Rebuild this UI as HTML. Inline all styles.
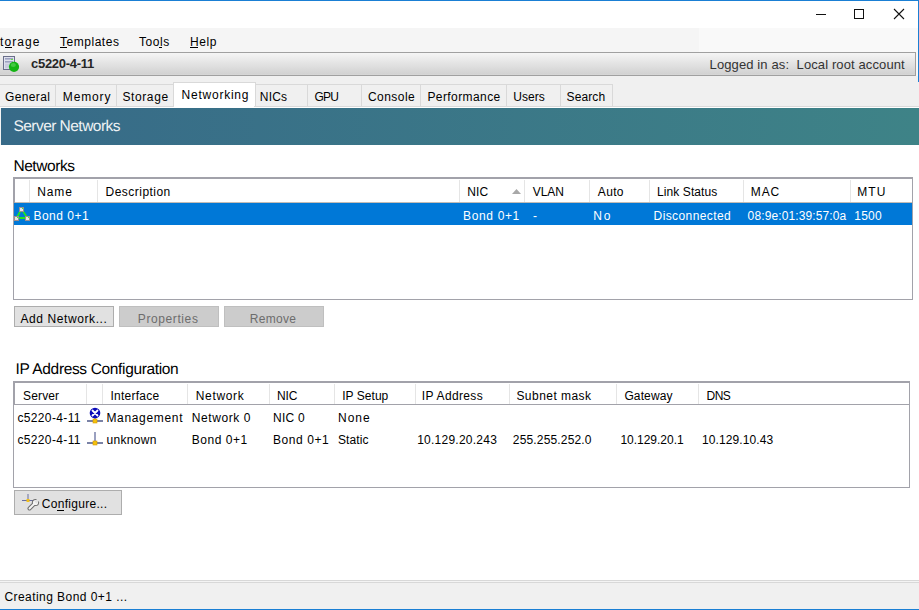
<!DOCTYPE html>
<html><head><meta charset="utf-8">
<style>
html,body{margin:0;padding:0;}
body{width:919px;height:610px;overflow:hidden;position:relative;background:#fff;font-family:"Liberation Sans",sans-serif;}
.a{position:absolute;}
.t{position:absolute;white-space:pre;line-height:20px;height:20px;font-family:"Liberation Sans",sans-serif;}
</style></head><body>
<!-- title bar -->
<div class="a" style="left:0;top:0;width:919px;height:1px;background:#1a7fd4"></div>
<div class="a" style="left:918px;top:0;width:1px;height:82px;background:#1a7fd4"></div>
<svg class="a" style="left:0;top:0" width="919" height="28">
  <rect x="816" y="14" width="10" height="1" fill="#111"/>
  <rect x="854.5" y="9.5" width="9" height="9" fill="none" stroke="#111" stroke-width="1"/>
  <path d="M894 9 L904 19 M904 9 L894 19" stroke="#111" stroke-width="1.1"/>
</svg>
<!-- menu bar -->
<div class="a" style="left:0;top:28px;width:699px;height:24px;background:#f5f5f5"></div>
<div class="a" style="left:699px;top:28px;width:219px;height:24px;background:#f9f9f9"></div>
<!-- menu underlines -->
<div class="a" style="left:5px;top:47px;width:7px;height:1px;background:#000"></div>
<div class="a" style="left:60px;top:47px;width:7px;height:1px;background:#000"></div>
<div class="a" style="left:159px;top:47px;width:3px;height:1px;background:#000"></div>
<div class="a" style="left:190px;top:47px;width:8px;height:1px;background:#000"></div>
<!-- host header -->
<div class="a" style="left:0;top:52px;width:915px;height:22px;border-top:1px solid #a0a0a0;border-bottom:1px solid #a0a0a0;border-right:1px solid #a0a0a0;background:linear-gradient(#f5f5f5,#e6e6e6 40%,#d2d2d2 95%,#d8d8d8)"></div>
<div class="a" style="left:916px;top:52px;width:2px;height:24px;background:#f9f9f9"></div>
<svg class="a" style="left:0;top:52px" width="24" height="22">
  <rect x="3.5" y="4.5" width="11" height="13" fill="#dfe1ee" stroke="#6a6f8a"/>
  <rect x="5" y="6" width="8" height="1.6" fill="#9da2c0"/>
  <rect x="5" y="9" width="8" height="1.6" fill="#9da2c0"/>
  <rect x="5" y="11.5" width="8" height="5" fill="#c9ccde"/>
  <rect x="11" y="7" width="2" height="1" fill="#66e040"/>
  <circle cx="14" cy="14.8" r="5.1" fill="#14b414"/>
  <ellipse cx="13.3" cy="13" rx="2.6" ry="2" fill="#7ee07e" opacity="0.45"/>
</svg>
<!-- tab strip -->
<div class="a" style="left:0;top:76px;width:919px;height:30px;background:#f0f0f0"></div>
<div class="a" style="left:0;top:84px;width:612px;height:23px;border-top:1px solid #d9d9d9;"></div>
<div class="a" style="left:55px;top:84px;width:1px;height:23px;background:#d9d9d9"></div>
<div class="a" style="left:116px;top:84px;width:1px;height:23px;background:#d9d9d9"></div>
<div class="a" style="left:307px;top:84px;width:1px;height:23px;background:#d9d9d9"></div>
<div class="a" style="left:361px;top:84px;width:1px;height:23px;background:#d9d9d9"></div>
<div class="a" style="left:420px;top:84px;width:1px;height:23px;background:#d9d9d9"></div>
<div class="a" style="left:506px;top:84px;width:1px;height:23px;background:#d9d9d9"></div>
<div class="a" style="left:560px;top:84px;width:1px;height:23px;background:#d9d9d9"></div>
<div class="a" style="left:612px;top:84px;width:1px;height:23px;background:#d9d9d9"></div>
<div class="a" style="left:173px;top:82px;width:81px;height:25px;background:#fff;border:1px solid #d9d9d9;border-bottom:none"></div>
<!-- banner -->
<div class="a" style="left:0;top:106px;width:919px;height:1px;background:#dadada"></div>
<div class="a" style="left:0;top:107px;width:919px;height:1px;background:#fff"></div>
<div class="a" style="left:0;top:108px;width:1px;height:37px;background:#f4f4f4"></div>
<div class="a" style="left:174px;top:106px;width:80px;height:2px;background:#fff"></div>
<div class="a" style="left:1px;top:108px;width:918px;height:37px;background:linear-gradient(90deg,#376a88,#3e8387)"></div>

<!-- grid 1 -->
<div class="a" style="left:13px;top:177px;width:898px;height:120px;border:1px solid #a2a2aa;border-top-width:2px;background:#fff"></div>
<div class="a" style="left:14px;top:179px;width:1px;height:24px;background:#a2a2aa"></div>
<div class="a" style="left:15px;top:202px;width:897px;height:1px;background:#c2bcb6"></div>
<div class="a" style="left:29px;top:180px;width:1px;height:22px;background:#e5e5e5"></div>
<div class="a" style="left:97px;top:180px;width:1px;height:22px;background:#e5e5e5"></div>
<div class="a" style="left:459px;top:180px;width:1px;height:22px;background:#e5e5e5"></div>
<div class="a" style="left:524px;top:180px;width:1px;height:22px;background:#e5e5e5"></div>
<div class="a" style="left:589px;top:180px;width:1px;height:22px;background:#e5e5e5"></div>
<div class="a" style="left:649px;top:180px;width:1px;height:22px;background:#e5e5e5"></div>
<div class="a" style="left:743px;top:180px;width:1px;height:22px;background:#e5e5e5"></div>
<div class="a" style="left:850px;top:180px;width:1px;height:22px;background:#e5e5e5"></div>
<svg class="a" style="left:505px;top:186px" width="20" height="10"><path d="M7 8 L11.5 3 L16 8 Z" fill="#a8a8a8"/></svg>
<div class="a" style="left:14px;top:203px;width:898px;height:22px;background:#0078d7"></div>
<svg class="a" style="left:14px;top:203px" width="16" height="22">
  <path d="M7.5 6 L2.5 15 L13.5 15 Z" fill="none" stroke="#1ee61e" stroke-width="1.8"/>
  <rect x="5.5" y="4.5" width="4" height="4" fill="#e4e4e4" stroke="#9a8f8f" stroke-width="1"/>
  <rect x="0.5" y="13.5" width="4" height="4" fill="#e4e4e4" stroke="#9a8f8f" stroke-width="1"/>
  <rect x="11.5" y="13.5" width="4" height="4" fill="#e4e4e4" stroke="#9a8f8f" stroke-width="1"/>
  <rect x="8" y="5" width="1" height="1" fill="#3f3"/><rect x="3" y="14" width="1" height="1" fill="#3f3"/><rect x="14" y="14" width="1" height="1" fill="#3f3"/>
</svg>

<!-- buttons -->
<div class="a" style="left:14px;top:306px;width:98px;height:19px;background:#e1e1e1;border:1px solid #adadad"></div>
<div class="a" style="left:119px;top:306px;width:98px;height:19px;background:#cccccc;border:1px solid #bfbfbf"></div>
<div class="a" style="left:224px;top:306px;width:98px;height:19px;background:#cccccc;border:1px solid #bfbfbf"></div>

<!-- grid 2 -->
<div class="a" style="left:13px;top:381px;width:895px;height:104px;border:1px solid #a2a2aa;border-top-width:2px;background:#fff"></div>
<div class="a" style="left:14px;top:383px;width:1px;height:21px;background:#a2a2aa"></div>
<div class="a" style="left:14px;top:404px;width:895px;height:1px;background:#a2a2aa"></div>
<div class="a" style="left:86px;top:384px;width:1px;height:20px;background:#e5e5e5"></div>
<div class="a" style="left:102px;top:384px;width:1px;height:20px;background:#e5e5e5"></div>
<div class="a" style="left:187px;top:384px;width:1px;height:20px;background:#e5e5e5"></div>
<div class="a" style="left:269px;top:384px;width:1px;height:20px;background:#e5e5e5"></div>
<div class="a" style="left:334px;top:384px;width:1px;height:20px;background:#e5e5e5"></div>
<div class="a" style="left:415px;top:384px;width:1px;height:20px;background:#e5e5e5"></div>
<div class="a" style="left:509px;top:384px;width:1px;height:20px;background:#e5e5e5"></div>
<div class="a" style="left:616px;top:384px;width:1px;height:20px;background:#e5e5e5"></div>
<div class="a" style="left:698px;top:384px;width:1px;height:20px;background:#e5e5e5"></div>
<svg class="a" style="left:86px;top:405px" width="18" height="44">
  <rect x="1" y="15" width="16" height="2" fill="#7a82a6"/>
  <rect x="8" y="12" width="2" height="4" fill="#9aa0c0"/>
  <rect x="7" y="14" width="4" height="4" fill="#f4c20d" stroke="#d89a00" stroke-width="0.6"/>
  <circle cx="9" cy="8" r="5.3" fill="#0a0ab8"/>
  <path d="M6.5 5.5 L11.5 10.5 M11.5 5.5 L6.5 10.5" stroke="#fff" stroke-width="1.8" stroke-linecap="round"/>
  <rect x="1" y="37" width="16" height="2" fill="#7a82a6"/>
  <rect x="8" y="27" width="2" height="10" fill="#9aa0c0"/>
  <rect x="7" y="36" width="4" height="4" fill="#f4c20d" stroke="#d89a00" stroke-width="0.6"/>
</svg>

<!-- configure button -->
<div class="a" style="left:14px;top:490px;width:106px;height:23px;background:#e1e1e1;border:1px solid #adadad"></div>
<svg class="a" style="left:20px;top:492px" width="20" height="20">
  <rect x="2" y="8" width="11" height="1" fill="#6a70a0"/>
  <rect x="7.5" y="2" width="1" height="7" fill="#6a70a0"/>
  <rect x="6.5" y="7" width="3" height="3" fill="#f2c01a"/>
  <path d="M9.5 16.5 L14 12" stroke="#6e6e6e" stroke-width="4" stroke-linecap="round"/>
  <circle cx="15.5" cy="10.5" r="3.6" fill="#6e6e6e"/>
  <path d="M9.5 16.5 L14 12" stroke="#f4f4f4" stroke-width="2" stroke-linecap="round"/>
  <circle cx="15.5" cy="10.5" r="2.6" fill="#f4f4f4"/>
  <path d="M15.5 10.5 L19 7" stroke="#e1e1e1" stroke-width="2.6"/>
</svg>

<!-- status bar -->
<div class="a" style="left:0;top:580px;width:919px;height:1px;background:#d8d8d8"></div>
<div class="a" style="left:0;top:581px;width:919px;height:1px;background:#f4f4f4"></div>
<div class="a" style="left:0;top:582px;width:919px;height:1px;background:#d8d8d8"></div>
<div class="a" style="left:0;top:583px;width:919px;height:26px;background:#f0f0f0"></div>
<div class="a" style="left:0;top:609px;width:919px;height:1px;background:#1a7fd4"></div>

<div class="a" style="left:57px;top:510px;width:7px;height:1px;background:#000"></div>
<div class="a" style="left:918px;top:52px;width:1px;height:30px;background:#1a7fd4"></div>
<div class="t" style="left:0.0px;top:32px;font-size:12px;letter-spacing:1.094px;color:#000;">torage</div>
<div class="t" style="left:60.0px;top:32px;font-size:12px;letter-spacing:0.525px;color:#000;">Templates</div>
<div class="t" style="left:139.0px;top:32px;font-size:12px;letter-spacing:0.571px;color:#000;">Tools</div>
<div class="t" style="left:190.0px;top:32px;font-size:12px;letter-spacing:0.604px;color:#000;">Help</div>
<div class="t" style="left:31.0px;top:54px;font-size:13px;letter-spacing:-0.276px;color:#262626;font-weight:bold;">c5220-4-11</div>
<div class="t" style="left:709.6px;top:55px;font-size:13px;letter-spacing:0.112px;color:#333;">Logged in as:  Local root account</div>
<div class="t" style="left:5.0px;top:87px;font-size:12px;letter-spacing:0.366px;color:#000;">General</div>
<div class="t" style="left:62.8px;top:87px;font-size:12px;letter-spacing:0.871px;color:#000;">Memory</div>
<div class="t" style="left:122.4px;top:87px;font-size:12px;letter-spacing:0.611px;color:#000;">Storage</div>
<div class="t" style="left:181.6px;top:85px;font-size:12px;letter-spacing:0.763px;color:#000;">Networking</div>
<div class="t" style="left:259.8px;top:87px;font-size:12px;letter-spacing:0.209px;color:#000;">NICs</div>
<div class="t" style="left:314.4px;top:87px;font-size:12px;letter-spacing:-0.758px;color:#000;">GPU</div>
<div class="t" style="left:368.0px;top:87px;font-size:12px;letter-spacing:0.445px;color:#000;">Console</div>
<div class="t" style="left:427.4px;top:87px;font-size:12px;letter-spacing:0.420px;color:#000;">Performance</div>
<div class="t" style="left:513.2px;top:87px;font-size:12px;letter-spacing:0.039px;color:#000;">Users</div>
<div class="t" style="left:566.6px;top:87px;font-size:12px;letter-spacing:0.094px;color:#000;">Search</div>
<div class="t" style="left:13.4px;top:117px;font-size:15.5px;letter-spacing:-0.533px;color:#eef2f4;text-rendering:geometricPrecision;">Server Networks</div>
<div class="t" style="left:13.4px;top:157px;font-size:15.5px;letter-spacing:-0.416px;color:#000;text-rendering:geometricPrecision;">Networks</div>
<div class="t" style="left:37.2px;top:182px;font-size:12px;letter-spacing:0.895px;color:#000;">Name</div>
<div class="t" style="left:105.6px;top:182px;font-size:12px;letter-spacing:0.467px;color:#000;">Description</div>
<div class="t" style="left:467.2px;top:182px;font-size:12px;letter-spacing:0.114px;color:#000;">NIC</div>
<div class="t" style="left:532.8px;top:182px;font-size:12px;letter-spacing:-0.086px;color:#000;">VLAN</div>
<div class="t" style="left:597.8px;top:182px;font-size:12px;letter-spacing:0.338px;color:#000;">Auto</div>
<div class="t" style="left:657.0px;top:182px;font-size:12px;letter-spacing:0.093px;color:#000;">Link Status</div>
<div class="t" style="left:750.8px;top:182px;font-size:12px;letter-spacing:0.914px;color:#000;">MAC</div>
<div class="t" style="left:857.2px;top:182px;font-size:12px;letter-spacing:1.150px;color:#000;">MTU</div>
<div class="t" style="left:33.4px;top:206px;font-size:12px;letter-spacing:0.512px;color:#fff;">Bond 0+1</div>
<div class="t" style="left:463.0px;top:206px;font-size:12px;letter-spacing:0.654px;color:#fff;">Bond 0+1</div>
<div class="t" style="left:533.0px;top:206px;font-size:12px;letter-spacing:0.304px;color:#fff;">-</div>
<div class="t" style="left:593.2px;top:206px;font-size:12px;letter-spacing:1.956px;color:#fff;">No</div>
<div class="t" style="left:653.6px;top:206px;font-size:12px;letter-spacing:0.398px;color:#fff;">Disconnected</div>
<div class="t" style="left:747.6px;top:206px;font-size:12px;letter-spacing:0.121px;color:#fff;">08:9e:01:39:57:0a</div>
<div class="t" style="left:854.2px;top:206px;font-size:12px;letter-spacing:0.266px;color:#fff;">1500</div>
<div class="t" style="left:20.4px;top:309px;font-size:12px;letter-spacing:0.600px;color:#000;">Add Network...</div>
<div class="t" style="left:137.8px;top:309px;font-size:12px;letter-spacing:0.600px;color:#6d6d6d;">Properties</div>
<div class="t" style="left:249.8px;top:309px;font-size:12px;letter-spacing:0.282px;color:#6d6d6d;">Remove</div>
<div class="t" style="left:15.6px;top:360px;font-size:15.5px;letter-spacing:-0.352px;color:#000;text-rendering:geometricPrecision;">IP Address Configuration</div>
<div class="t" style="left:23.0px;top:386px;font-size:12px;letter-spacing:0.151px;color:#000;">Server</div>
<div class="t" style="left:110.4px;top:386px;font-size:12px;letter-spacing:0.250px;color:#000;">Interface</div>
<div class="t" style="left:195.8px;top:386px;font-size:12px;letter-spacing:0.647px;color:#000;">Network</div>
<div class="t" style="left:277.0px;top:386px;font-size:12px;letter-spacing:-0.086px;color:#000;">NIC</div>
<div class="t" style="left:342.2px;top:386px;font-size:12px;letter-spacing:0.039px;color:#000;">IP Setup</div>
<div class="t" style="left:421.8px;top:386px;font-size:12px;letter-spacing:0.341px;color:#000;">IP Address</div>
<div class="t" style="left:516.4px;top:386px;font-size:12px;letter-spacing:0.465px;color:#000;">Subnet mask</div>
<div class="t" style="left:624.4px;top:386px;font-size:12px;letter-spacing:0.123px;color:#000;">Gateway</div>
<div class="t" style="left:706.6px;top:386px;font-size:12px;letter-spacing:-0.622px;color:#000;">DNS</div>
<div class="t" style="left:17.4px;top:408px;font-size:12px;letter-spacing:0.364px;color:#000;">c5220-4-11</div>
<div class="t" style="left:106.4px;top:408px;font-size:12px;letter-spacing:0.673px;color:#000;">Management</div>
<div class="t" style="left:191.8px;top:408px;font-size:12px;letter-spacing:0.584px;color:#000;">Network 0</div>
<div class="t" style="left:273.0px;top:408px;font-size:12px;letter-spacing:0.253px;color:#000;">NIC 0</div>
<div class="t" style="left:338.0px;top:408px;font-size:12px;letter-spacing:1.004px;color:#000;">None</div>
<div class="t" style="left:17.4px;top:430px;font-size:12px;letter-spacing:0.364px;color:#000;">c5220-4-11</div>
<div class="t" style="left:106.4px;top:430px;font-size:12px;letter-spacing:0.342px;color:#000;">unknown</div>
<div class="t" style="left:191.8px;top:430px;font-size:12px;letter-spacing:0.512px;color:#000;">Bond 0+1</div>
<div class="t" style="left:273.0px;top:430px;font-size:12px;letter-spacing:0.569px;color:#000;">Bond 0+1</div>
<div class="t" style="left:338.0px;top:430px;font-size:12px;letter-spacing:0.097px;color:#000;">Static</div>
<div class="t" style="left:417.2px;top:430px;font-size:12px;letter-spacing:0.246px;color:#000;">10.129.20.243</div>
<div class="t" style="left:512.8px;top:430px;font-size:12px;letter-spacing:0.162px;color:#000;">255.255.252.0</div>
<div class="t" style="left:620.4px;top:430px;font-size:12px;letter-spacing:-0.011px;color:#000;">10.129.20.1</div>
<div class="t" style="left:702.0px;top:430px;font-size:12px;letter-spacing:0.093px;color:#000;">10.129.10.43</div>
<div class="t" style="left:41.8px;top:494px;font-size:12px;letter-spacing:0.296px;color:#000;">Configure...</div>
<div class="t" style="left:4.4px;top:587px;font-size:12px;letter-spacing:0.447px;color:#000;">Creating Bond 0+1 ...</div>
</body></html>
